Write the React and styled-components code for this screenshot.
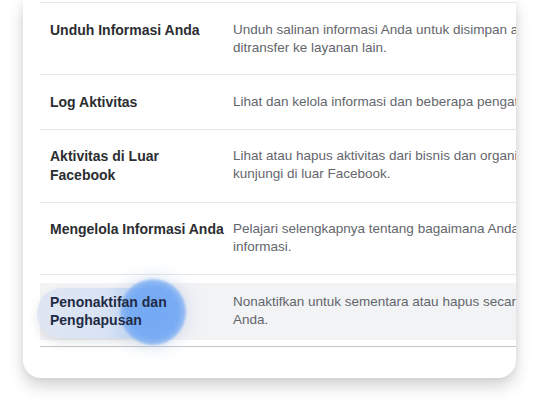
import React from 'react';
import styled, {createGlobalStyle} from 'styled-components';

const GlobalStyle = createGlobalStyle`
    html, body {
        margin: 0;
        padding: 0;
        background: #ffffff;
    }
    body {
        font-family: "Liberation Sans", Arial, sans-serif;
        -webkit-font-smoothing: antialiased;
    }
`;

const Page = styled.div`
    width: 542px;
    height: 404px;
    overflow: hidden;
    background: #ffffff;
    padding: 0 26px 0 23px;
    box-sizing: border-box;
`;

const Card = styled.section`
    background: #ffffff;
    border-radius: 0 0 18px 18px;
    box-shadow: 0 9px 16px rgba(0, 0, 0, 0.16), 0 0 9px rgba(0, 0, 0, 0.07);
    overflow: hidden;
    padding: 2px 0 31px 17px;
`;

const Table = styled.div`
    width: 640px;
    border-top: 1px solid #e4e6e9;
    border-bottom: 1px solid #c4c6ca;
`;

const Row = styled.div`
    position: relative;
    border-bottom: ${p => (p.$last ? 'none' : '1px solid #e4e6e9')};
    padding: ${p => (p.$active ? '8px 0 6px' : '0')};
`;

const Inner = styled.div`
    position: relative;
    display: grid;
    grid-template-columns: 183px 1fr;
    padding: ${p => (p.$active ? '10px 0 10px 10px' : '17.5px 0 17.5px 10px')};
    background: ${p => (p.$active ? '#f2f3f5' : 'transparent')};
`;

const Title = styled.div`
    position: relative;
    z-index: 2;
    font-size: 14px;
    font-weight: 700;
    line-height: 18.5px;
    color: ${p => (p.$active ? '#1f2b45' : '#2b2d31')};
    padding-right: 6px;
`;

const Desc = styled.div`
    font-size: 13.5px;
    line-height: 18px;
    color: #63666c;
    white-space: nowrap;
`;

const Pill = styled.div`
    position: absolute;
    z-index: 1;
    left: -3px;
    top: 5px;
    width: 140px;
    height: 50px;
    border-radius: 25px;
    background: linear-gradient(90deg, #dfe6f2 0%, #d8e3f5 50%, #a9c8f5 100%);
    box-shadow: 0 5px 10px rgba(60, 70, 90, 0.14);
    pointer-events: none;
`;

const Ripple = styled.div`
    position: absolute;
    z-index: 1;
    left: 80px;
    top: -4px;
    width: 66px;
    height: 66px;
    border-radius: 50%;
    background: radial-gradient(circle, #74a9f4 0%, #78acf4 55%, rgba(135, 178, 240, 0.7) 75%, rgba(200, 215, 240, 0) 100%);
    box-shadow: 0 0 14px 6px rgba(180, 198, 228, 0.3);
    filter: blur(1px);
    pointer-events: none;
`;

const items = [
    {
        title: ['Unduh Informasi Anda'],
        lines: ['Unduh salinan informasi Anda untuk disimpan atau', 'ditransfer ke layanan lain.'],
    },
    {
        title: ['Log Aktivitas'],
        lines: ['Lihat dan kelola informasi dan beberapa pengaturan Anda.'],
    },
    {
        title: ['Aktivitas di Luar', 'Facebook'],
        lines: ['Lihat atau hapus aktivitas dari bisnis dan organisasi yang Anda', 'kunjungi di luar Facebook.'],
    },
    {
        title: ['Mengelola Informasi Anda'],
        lines: ['Pelajari selengkapnya tentang bagaimana Anda dapat mengelola', 'informasi.'],
    },
    {
        title: ['Penonaktifan dan', 'Penghapusan'],
        lines: ['Nonaktifkan untuk sementara atau hapus secara permanen akun', 'Anda.'],
        active: true,
    },
];

const App = () => {
    return <>
        <GlobalStyle/>
        <Page>
            <Card>
                <Table>
                    {items.map((item, i) =>
                        <Row key={item.title[0]} $active={item.active} $last={i === items.length - 1}>
                            <Inner $active={item.active}>
                                {item.active && <>
                                    <Pill/>
                                    <Ripple/>
                                </>}
                                <Title $active={item.active}>
                                    {item.title.map(t => <div key={t}>{t}</div>)}
                                </Title>
                                <Desc>
                                    {item.lines.map(l => <div key={l}>{l}</div>)}
                                </Desc>
                            </Inner>
                        </Row>
                    )}
                </Table>
            </Card>
        </Page>
    </>
}

export default App;
